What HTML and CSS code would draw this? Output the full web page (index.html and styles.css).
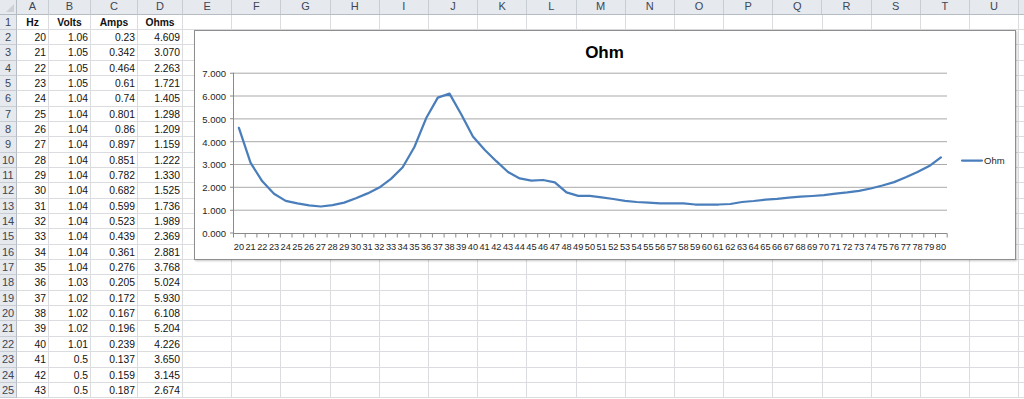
FILE: index.html
```html
<!DOCTYPE html>
<html>
<head>
<meta charset="utf-8">
<title>Ohm</title>
<link rel="stylesheet" href="styles.css">
</head>
<body>
<div class="sheet">
  <div class="corner"><span class="tri"></span></div>
  <div class="ch">A</div><div class="ch">B</div><div class="ch">C</div><div class="ch">D</div>
  <div class="chfill"><span>E</span><span>F</span><span>G</span><span>H</span><span>I</span><span>J</span><span>K</span><span>L</span><span>M</span><span>N</span><span>O</span><span>P</span><span>Q</span><span>R</span><span>S</span><span>T</span><span>U</span><span></span></div>

  <div class="rh">1</div><div class="c b">Hz</div><div class="c b">Volts</div><div class="c b">Amps</div><div class="c b">Ohms</div><div class="fill"></div>
  <div class="rh">2</div><div class="c">20</div><div class="c">1.06</div><div class="c">0.23</div><div class="c">4.609</div><div class="fill"></div>
  <div class="rh">3</div><div class="c">21</div><div class="c">1.05</div><div class="c">0.342</div><div class="c">3.070</div><div class="fill"></div>
  <div class="rh">4</div><div class="c">22</div><div class="c">1.05</div><div class="c">0.464</div><div class="c">2.263</div><div class="fill"></div>
  <div class="rh">5</div><div class="c">23</div><div class="c">1.05</div><div class="c">0.61</div><div class="c">1.721</div><div class="fill"></div>
  <div class="rh">6</div><div class="c">24</div><div class="c">1.04</div><div class="c">0.74</div><div class="c">1.405</div><div class="fill"></div>
  <div class="rh">7</div><div class="c">25</div><div class="c">1.04</div><div class="c">0.801</div><div class="c">1.298</div><div class="fill"></div>
  <div class="rh">8</div><div class="c">26</div><div class="c">1.04</div><div class="c">0.86</div><div class="c">1.209</div><div class="fill"></div>
  <div class="rh">9</div><div class="c">27</div><div class="c">1.04</div><div class="c">0.897</div><div class="c">1.159</div><div class="fill"></div>
  <div class="rh">10</div><div class="c">28</div><div class="c">1.04</div><div class="c">0.851</div><div class="c">1.222</div><div class="fill"></div>
  <div class="rh">11</div><div class="c">29</div><div class="c">1.04</div><div class="c">0.782</div><div class="c">1.330</div><div class="fill"></div>
  <div class="rh">12</div><div class="c">30</div><div class="c">1.04</div><div class="c">0.682</div><div class="c">1.525</div><div class="fill"></div>
  <div class="rh">13</div><div class="c">31</div><div class="c">1.04</div><div class="c">0.599</div><div class="c">1.736</div><div class="fill"></div>
  <div class="rh">14</div><div class="c">32</div><div class="c">1.04</div><div class="c">0.523</div><div class="c">1.989</div><div class="fill"></div>
  <div class="rh">15</div><div class="c">33</div><div class="c">1.04</div><div class="c">0.439</div><div class="c">2.369</div><div class="fill"></div>
  <div class="rh">16</div><div class="c">34</div><div class="c">1.04</div><div class="c">0.361</div><div class="c">2.881</div><div class="fill"></div>
  <div class="rh">17</div><div class="c">35</div><div class="c">1.04</div><div class="c">0.276</div><div class="c">3.768</div><div class="fill"></div>
  <div class="rh">18</div><div class="c">36</div><div class="c">1.03</div><div class="c">0.205</div><div class="c">5.024</div><div class="fill"></div>
  <div class="rh">19</div><div class="c">37</div><div class="c">1.02</div><div class="c">0.172</div><div class="c">5.930</div><div class="fill"></div>
  <div class="rh">20</div><div class="c">38</div><div class="c">1.02</div><div class="c">0.167</div><div class="c">6.108</div><div class="fill"></div>
  <div class="rh">21</div><div class="c">39</div><div class="c">1.02</div><div class="c">0.196</div><div class="c">5.204</div><div class="fill"></div>
  <div class="rh">22</div><div class="c">40</div><div class="c">1.01</div><div class="c">0.239</div><div class="c">4.226</div><div class="fill"></div>
  <div class="rh">23</div><div class="c">41</div><div class="c">0.5</div><div class="c">0.137</div><div class="c">3.650</div><div class="fill"></div>
  <div class="rh">24</div><div class="c">42</div><div class="c">0.5</div><div class="c">0.159</div><div class="c">3.145</div><div class="fill"></div>
  <div class="rh">25</div><div class="c">43</div><div class="c">0.5</div><div class="c">0.187</div><div class="c">2.674</div><div class="fill"></div>
</div>

<div class="chart">
  <svg class="plot" width="820" height="228" viewBox="195 31 820 228">
    <text class="title" x="604.5" y="57.5" text-anchor="middle">Ohm</text>
    <g class="grid">
      <line x1="233" y1="73.2" x2="947" y2="73.2"/>
      <line x1="233" y1="96" x2="947" y2="96"/>
      <line x1="233" y1="118.9" x2="947" y2="118.9"/>
      <line x1="233" y1="141.7" x2="947" y2="141.7"/>
      <line x1="233" y1="164.5" x2="947" y2="164.5"/>
      <line x1="233" y1="187.3" x2="947" y2="187.3"/>
      <line x1="233" y1="210.2" x2="947" y2="210.2"/>
    </g>
    <g class="axis">
      <line x1="233.5" y1="72.7" x2="233.5" y2="233.5"/>
      <line x1="233" y1="233.5" x2="947.2" y2="233.5"/>
      <line class="yticks" x1="231.5" y1="72.7" x2="231.5" y2="234" />
      <line class="xticks" x1="233" y1="235.5" x2="948" y2="235.5" />
    </g>
    <g class="ylab" text-anchor="end">
      <text x="226" y="77">7.000</text>
      <text x="226" y="99.8">6.000</text>
      <text x="226" y="122.7">5.000</text>
      <text x="226" y="145.5">4.000</text>
      <text x="226" y="168.3">3.000</text>
      <text x="226" y="191.1">2.000</text>
      <text x="226" y="214">1.000</text>
      <text x="226" y="236.8">0.000</text>
    </g>
    <g class="xlab" text-anchor="middle">
      <text x="238.9" y="250">20</text><text x="250.6" y="250">21</text><text x="262.3" y="250">22</text><text x="274" y="250">23</text><text x="285.7" y="250">24</text><text x="297.4" y="250">25</text><text x="309.1" y="250">26</text><text x="320.8" y="250">27</text><text x="332.5" y="250">28</text><text x="344.2" y="250">29</text>
      <text x="355.9" y="250">30</text><text x="367.6" y="250">31</text><text x="379.3" y="250">32</text><text x="391" y="250">33</text><text x="402.7" y="250">34</text><text x="414.4" y="250">35</text><text x="426.1" y="250">36</text><text x="437.8" y="250">37</text><text x="449.5" y="250">38</text><text x="461.2" y="250">39</text>
      <text x="472.9" y="250">40</text><text x="484.6" y="250">41</text><text x="496.3" y="250">42</text><text x="508" y="250">43</text><text x="519.7" y="250">44</text><text x="531.4" y="250">45</text><text x="543.1" y="250">46</text><text x="554.8" y="250">47</text><text x="566.5" y="250">48</text><text x="578.2" y="250">49</text>
      <text x="589.9" y="250">50</text><text x="601.6" y="250">51</text><text x="613.3" y="250">52</text><text x="625" y="250">53</text><text x="636.7" y="250">54</text><text x="648.4" y="250">55</text><text x="660.1" y="250">56</text><text x="671.8" y="250">57</text><text x="683.5" y="250">58</text><text x="695.2" y="250">59</text>
      <text x="706.9" y="250">60</text><text x="718.6" y="250">61</text><text x="730.3" y="250">62</text><text x="742" y="250">63</text><text x="753.7" y="250">64</text><text x="765.4" y="250">65</text><text x="777.1" y="250">66</text><text x="788.8" y="250">67</text><text x="800.5" y="250">68</text><text x="812.2" y="250">69</text>
      <text x="823.9" y="250">70</text><text x="835.6" y="250">71</text><text x="847.3" y="250">72</text><text x="859" y="250">73</text><text x="870.7" y="250">74</text><text x="882.4" y="250">75</text><text x="894.1" y="250">76</text><text x="905.8" y="250">77</text><text x="917.5" y="250">78</text><text x="929.2" y="250">79</text>
      <text x="940.9" y="250">80</text>
    </g>
    <polyline class="series" points="238.9,127.8 250.6,162.9 262.3,181.3 274,193.7 285.7,200.9 297.4,203.4 309.1,205.4 320.8,206.5 332.5,205.1 344.2,202.6 355.9,198.2 367.6,193.4 379.3,187.6 391,178.9 402.7,167.2 414.4,147 426.1,118.3 437.8,97.6 449.5,93.6 461.2,114.2 472.9,136.5 484.6,149.7 496.3,161.2 508,172 519.7,178.4 531.4,180.7 543.1,180 554.8,182.3 566.5,192.4 578.2,195.8 589.9,195.8 601.6,197.4 613.3,199 625,200.8 636.7,202 648.4,202.6 660.1,203.3 671.8,203.3 683.5,203.3 695.2,204.5 706.9,204.5 718.6,204.5 730.3,204 742,202 753.7,201 765.4,199.7 777.1,198.8 788.8,197.6 800.5,196.7 812.2,196 823.9,195.1 835.6,193.7 847.3,192.4 859,190.8 870.7,188.5 882.4,185.5 894.1,182.1 905.8,177.3 917.5,172 929.2,166.1 940.9,157.4"/>
    <line class="series" x1="962" y1="160.5" x2="982" y2="160.5"/>
    <text class="legend" x="984" y="164">Ohm</text>
  </svg>
</div>
</body>
</html>
```

FILE: styles.css
```css
html, body {
  margin: 0;
  padding: 0;
  background: #ffffff;
  overflow: hidden;
}

body {
  width: 1024px;
  height: 399px;
  position: relative;
  font-family: "Liberation Sans", Arial, sans-serif;
}

.sheet {
  display: grid;
  grid-template-columns: 17px 32px 42px 47px 45px 1fr;
  grid-template-rows: 14.6px repeat(25, 15.35px);
  width: 1024px;
}

.corner {
  position: relative;
  background: #e6e9ed;
  border-right: 1px solid #b6bcc4;
  border-bottom: 1px solid #b6bcc4;
  box-sizing: border-box;
}

.tri {
  position: absolute;
  right: 2px;
  bottom: 2px;
  width: 0;
  height: 0;
  border-left: 8px solid transparent;
  border-bottom: 8px solid #cdd1d6;
}

.ch {
  background: #e6e9ed;
  border-right: 1px solid #c8cdd3;
  border-bottom: 1px solid #b6bcc4;
  box-sizing: border-box;
  color: #3c4656;
  font-size: 11px;
  line-height: 13.6px;
  text-align: center;
}

.chfill {
  display: flex;
  background: #e6e9ed;
  border-bottom: 1px solid #b6bcc4;
  box-sizing: border-box;
  overflow: hidden;
}

.chfill span {
  flex: 0 0 49.2px;
  box-sizing: border-box;
  border-right: 1px solid #c8cdd3;
  color: #3c4656;
  font-size: 11px;
  line-height: 13.6px;
  text-align: center;
}

.rh {
  background: #e6e9ed;
  border-right: 1px solid #b6bcc4;
  border-bottom: 1px solid #c8cdd3;
  box-sizing: border-box;
  color: #3c4656;
  font-size: 11px;
  line-height: 15px;
  text-align: center;
}

.c {
  border-right: 1px solid #dadcdf;
  border-bottom: 1px solid #dadcdf;
  box-sizing: border-box;
  color: #111111;
  font-size: 10.3px;
  line-height: 15.5px;
  text-align: right;
  padding-right: 2px;
  white-space: nowrap;
  overflow: hidden;
}

.c.b {
  font-weight: bold;
  text-align: center;
  padding-right: 0;
}

.fill {
  border-bottom: 1px solid #dadcdf;
  box-sizing: border-box;
  background: repeating-linear-gradient(to right, transparent 0, transparent 48.2px, #dadcdf 48.2px, #dadcdf 49.2px);
}

.chart {
  position: absolute;
  left: 194px;
  top: 30px;
  width: 822px;
  height: 230px;
  box-sizing: border-box;
  border: 1px solid #8e8e8e;
  background: #ffffff;
  box-shadow: 1px 1px 2px rgba(0, 0, 0, 0.22);
}

.plot {
  display: block;
}

.plot text {
  font-family: "Liberation Sans", Arial, sans-serif;
  fill: #1e1e1e;
}

.plot .title {
  font-size: 17px;
  font-weight: bold;
  fill: #000000;
}

.grid line {
  stroke: #a9a9a9;
  stroke-width: 1;
}

.axis line {
  stroke: #8a8a8a;
  stroke-width: 1;
}

.axis .yticks {
  stroke-width: 3;
  stroke-dasharray: 1 21.83;
}

.axis .xticks {
  stroke-width: 4;
  stroke-dasharray: 1 10.7;
}

.ylab text {
  font-size: 9.5px;
}

.xlab text {
  font-size: 9.2px;
}

.series {
  fill: none;
  stroke: #4a7ebb;
  stroke-width: 2.25;
  stroke-linejoin: round;
  stroke-linecap: round;
}

.plot .legend {
  font-size: 9.5px;
}
```
